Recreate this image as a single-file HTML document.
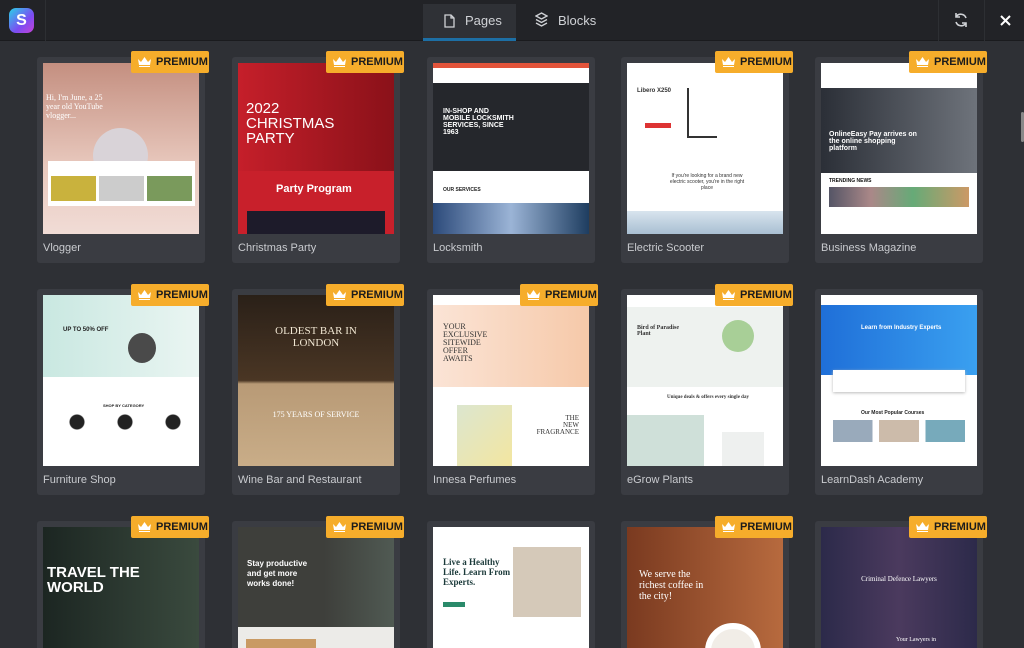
<!DOCTYPE html>
<html style="width:1024px;height:648px;overflow:hidden"><head><meta charset="utf-8"><style>
*{margin:0;padding:0;box-sizing:border-box}
body{width:1024px;height:648px;overflow:hidden;background:#2e3035;font-family:"Liberation Sans",sans-serif;position:relative}
.hdr{position:absolute;left:0;top:0;width:1024px;height:41px;background:#222327;border-bottom:1px solid #1a1b1e}
.logo{position:absolute;left:9px;top:8px;width:25px;height:25px;border-radius:7px;background:linear-gradient(135deg,#29d3e8,#7b4cf2 60%,#c642d6);color:#fff;font-weight:bold;font-size:16px;text-align:center;line-height:25px}
.sep{position:absolute;top:0;width:1px;height:41px;background:#2d2f33}
.tab{position:absolute;top:4px;height:37px;color:#d0d2d6;font-size:13px;line-height:33px}
.tab.on{background:#2f3136;border-bottom:3px solid #1d6fa5}
.card{position:absolute;width:168px;height:206px;background:#3a3c42;border-radius:3px}
.img{position:absolute;left:6px;top:6px;width:156px;height:171px;overflow:hidden;background:#fff}
.lbl{position:absolute;left:6px;top:185px;color:#c9cbcf;font-size:11px}
.prem{position:absolute;width:78px;height:22px;background:#f6ad2b;border-radius:2px;color:#1c1c1c;font-weight:bold;font-size:11px;line-height:22px;padding-left:25px}
.prem svg{position:absolute;left:7px;top:6px}
.b{position:absolute}
</style></head><body>
<div class="hdr">
<div class="logo">S</div>
<div class="sep" style="left:45px"></div>
<div class="tab on" style="left:423px;width:93px"><svg style="position:absolute;left:21px;top:10px" width="11" height="14" viewBox="0 0 11 14" fill="none" stroke="#d0d2d6" stroke-width="1.3"><path d="M1 1h6l3 3v9H1z M7 1v3h3"/></svg><span style="position:absolute;left:42px">Pages</span></div>
<div class="tab" style="left:530px;width:80px"><svg style="position:absolute;left:5px;top:8px" width="13" height="15" viewBox="0 0 13 15" fill="none" stroke="#d0d2d6" stroke-width="1.3"><path d="M6.5 1L12 4 6.5 7 1 4z M1 7.5l5.5 3 5.5-3 M1 11l5.5 3 5.5-3"/></svg><span style="position:absolute;left:28px">Blocks</span></div>
<div class="sep" style="left:938px"></div><div class="sep" style="left:984px"></div>
<svg style="position:absolute;left:953px;top:12px" width="16" height="16" viewBox="0 0 16 16" fill="none" stroke="#d0d2d6" stroke-width="1.6"><path d="M13 6A5.5 5.5 0 0 0 3 5M3 10a5.5 5.5 0 0 0 10 1"/><path d="M3 1v4h4M13 15v-4H9"/></svg>
<svg style="position:absolute;left:1000px;top:15px" width="11" height="11" viewBox="0 0 11 11" stroke="#fff" stroke-width="2"><path d="M1 1l9 9M10 1l-9 9"/></svg>
</div>

<div class="card" style="left:37px;top:57px"><div class="img" style="background:linear-gradient(#c48f80,#e8c8bd 60%,#f1dcd6)">
<div class="b" style="left:3px;top:30px;color:#fff;font-family:'Liberation Serif';font-size:8px;width:60px">Hi, I'm June, a 25 year old YouTube vlogger...</div>
<div class="b" style="left:50px;top:65px;width:55px;height:55px;border-radius:50%;background:#d9d3d8"></div>
<div class="b" style="left:5px;top:98px;width:147px;height:45px;background:#fff"><div class="b" style="left:3px;top:15px;width:45px;height:25px;background:#c9b23d"></div><div class="b" style="left:51px;top:15px;width:45px;height:25px;background:#ccc"></div><div class="b" style="left:99px;top:15px;width:45px;height:25px;background:#7a9a5c"></div></div></div><div class="lbl">Vlogger</div></div>
<div class="card" style="left:232px;top:57px"><div class="img" style="background:#c8202b">
<div class="b" style="left:0;top:0;width:156px;height:108px;background:linear-gradient(90deg,#c51f2a,#8a1119)"></div>
<div class="b" style="left:8px;top:38px;color:#fff;font-size:15px;line-height:15px">2022<br>CHRISTMAS<br>PARTY</div>
<div class="b" style="left:38px;top:120px;color:#fff;font-size:11px;font-weight:bold">Party Program</div>
<div class="b" style="left:9px;top:148px;width:138px;height:23px;background:#1d1b2a"></div></div><div class="lbl">Christmas Party</div></div>
<div class="card" style="left:427px;top:57px"><div class="img">
<div class="b" style="left:0;top:0;width:156px;height:5px;background:#e2543b"></div>
<div class="b" style="left:0;top:20px;width:156px;height:88px;background:#25272c"></div>
<div class="b" style="left:10px;top:45px;color:#fff;font-size:7px;font-weight:bold;width:75px">IN-SHOP AND MOBILE LOCKSMITH SERVICES, SINCE 1963</div>
<div class="b" style="left:10px;top:124px;color:#222;font-size:5px;font-weight:bold">OUR SERVICES</div>
<div class="b" style="left:0;top:140px;width:156px;height:31px;background:linear-gradient(90deg,#2c4a7a,#9bb4d6,#1e3d60)"></div></div><div class="lbl">Locksmith</div></div>
<div class="card" style="left:621px;top:57px"><div class="img">
<div class="b" style="left:10px;top:25px;color:#333;font-size:6px;font-weight:bold">Libero X250</div>
<div class="b" style="left:18px;top:60px;width:26px;height:5px;background:#d33"></div>
<div class="b" style="left:60px;top:25px;width:30px;height:50px;border-left:2px solid #333;border-bottom:2px solid #333"></div>
<div class="b" style="left:40px;top:110px;color:#333;font-size:5px;width:80px;text-align:center">If you're looking for a brand new electric scooter, you're in the right place</div>
<div class="b" style="left:0;top:148px;width:156px;height:23px;background:linear-gradient(#d8e4ee,#a9bfd2)"></div></div><div class="lbl">Electric Scooter</div></div>
<div class="card" style="left:815px;top:57px"><div class="img">
<div class="b" style="left:0;top:25px;width:156px;height:85px;background:linear-gradient(90deg,#2b2f37,#6e737b)"></div>
<div class="b" style="left:8px;top:68px;color:#fff;font-size:7px;font-weight:bold;width:90px">OnlineEasy Pay arrives on the online shopping platform</div>
<div class="b" style="left:8px;top:115px;color:#111;font-size:5px;font-weight:bold">TRENDING NEWS</div>
<div class="b" style="left:8px;top:124px;width:140px;height:20px;background:linear-gradient(90deg,#556,#a88 30%,#6a7 60%,#c96)"></div></div><div class="lbl">Business Magazine</div></div>

<div class="card" style="left:37px;top:289px"><div class="img">
<div class="b" style="left:0;top:0;width:156px;height:82px;background:linear-gradient(90deg,#c9e8e1,#eaf5f2)"></div>
<div class="b" style="left:20px;top:32px;color:#222;font-size:6px;font-weight:bold">UP TO 50% OFF</div>
<div class="b" style="left:85px;top:38px;width:28px;height:30px;border-radius:50%;background:#4a4a4a"></div>
<div class="b" style="left:60px;top:108px;color:#222;font-size:4px;font-weight:bold">SHOP BY CATEGORY</div>
<div class="b" style="left:22px;top:118px;width:120px;height:18px;background:radial-gradient(circle at 10% 50%,#222 7px,transparent 8px),radial-gradient(circle at 50% 50%,#222 7px,transparent 8px),radial-gradient(circle at 90% 50%,#222 7px,transparent 8px)"></div></div><div class="lbl">Furniture Shop</div></div>
<div class="card" style="left:232px;top:289px"><div class="img" style="background:linear-gradient(#2a2018,#4a3624 50%,#b89a76 52%,#c9ad88)">
<div class="b" style="left:18px;top:30px;color:#f0e6d2;font-family:'Liberation Serif';font-size:11px;width:120px;text-align:center;line-height:12px">OLDEST BAR IN LONDON</div>
<div class="b" style="left:18px;top:115px;color:#fff;font-family:'Liberation Serif';font-size:8px;width:120px;text-align:center">175 YEARS OF SERVICE</div></div><div class="lbl">Wine Bar and Restaurant</div></div>
<div class="card" style="left:427px;top:289px"><div class="img">
<div class="b" style="left:0;top:10px;width:156px;height:82px;background:linear-gradient(90deg,#fbe4d6,#f6c9a9)"></div>
<div class="b" style="left:10px;top:28px;color:#333;font-family:'Liberation Serif';font-size:8px;line-height:8px">YOUR<br>EXCLUSIVE<br>SITEWIDE<br>OFFER<br>AWAITS</div>
<div class="b" style="left:24px;top:110px;width:55px;height:61px;background:linear-gradient(135deg,#dce6cf,#f3e6a0)"></div>
<div class="b" style="left:100px;top:120px;color:#333;font-family:'Liberation Serif';font-size:7px;text-align:right;width:46px;line-height:7px">THE<br>NEW<br>FRAGRANCE</div></div><div class="lbl">Innesa Perfumes</div></div>
<div class="card" style="left:621px;top:289px"><div class="img">
<div class="b" style="left:0;top:12px;width:156px;height:80px;background:#eef2ef"></div>
<div class="b" style="left:10px;top:30px;color:#333;font-family:'Liberation Serif';font-size:6px;font-weight:bold">Bird of Paradise<br>Plant</div>
<div class="b" style="left:95px;top:25px;width:32px;height:32px;border-radius:50%;background:#a8cf97"></div>
<div class="b" style="left:40px;top:100px;color:#333;font-family:'Liberation Serif';font-size:5px;font-weight:bold">Unique deals &amp; offers every single day</div>
<div class="b" style="left:0;top:120px;width:77px;height:51px;background:#cfe0d9"></div>
<div class="b" style="left:95px;top:137px;width:42px;height:34px;background:#eef0ef"></div></div><div class="lbl">eGrow Plants</div></div>
<div class="card" style="left:815px;top:289px"><div class="img">
<div class="b" style="left:0;top:10px;width:156px;height:70px;background:linear-gradient(90deg,#1f6fd8,#3aa0f0)"></div>
<div class="b" style="left:40px;top:30px;color:#fff;font-size:6px;font-weight:bold">Learn from Industry Experts</div>
<div class="b" style="left:12px;top:75px;width:132px;height:22px;background:#fff;box-shadow:0 1px 3px #bbb"></div>
<div class="b" style="left:40px;top:115px;color:#222;font-size:5px;font-weight:bold">Our Most Popular Courses</div>
<div class="b" style="left:12px;top:125px;width:132px;height:22px;background:linear-gradient(90deg,#9ab 30%,#fff 30%,#fff 35%,#cba 35%,#cba 65%,#fff 65%,#fff 70%,#7ab 70%)"></div></div><div class="lbl">LearnDash Academy</div></div>

<div class="card" style="left:37px;top:521px"><div class="img" style="background:linear-gradient(90deg,#1c2622,#3a4a3e)">
<div class="b" style="left:4px;top:38px;color:#fff;font-size:15px;font-weight:bold;line-height:15px">TRAVEL THE<br>WORLD</div></div></div>
<div class="card" style="left:232px;top:521px"><div class="img" style="background:linear-gradient(90deg,#3e3f3b 55%,#505a53)">
<div class="b" style="left:9px;top:32px;color:#fff;font-size:8px;font-weight:bold;line-height:10px">Stay productive<br>and get more<br>works done!</div>
<div class="b" style="left:0;top:100px;width:156px;height:71px;background:#ecebe8"></div>
<div class="b" style="left:8px;top:112px;width:70px;height:40px;background:#c99a63"></div></div></div>
<div class="card" style="left:427px;top:521px"><div class="img">
<div class="b" style="left:10px;top:30px;color:#1b3a3a;font-family:'Liberation Serif';font-size:9px;font-weight:bold;line-height:10px">Live a Healthy<br>Life. Learn From<br>Experts.</div>
<div class="b" style="left:80px;top:20px;width:68px;height:70px;background:#d5c9b9"></div>
<div class="b" style="left:10px;top:75px;width:22px;height:5px;background:#2a8a6a"></div></div></div>
<div class="card" style="left:621px;top:521px"><div class="img" style="background:linear-gradient(90deg,#7a3a20,#b76a3e)">
<div class="b" style="left:12px;top:42px;color:#fff;font-family:'Liberation Serif';font-size:10px;line-height:11px">We serve the<br>richest coffee in<br>the city!</div>
<div class="b" style="left:78px;top:96px;width:56px;height:56px;border-radius:50%;background:#f1ede7;border:6px solid #fff"></div></div></div>
<div class="card" style="left:815px;top:521px"><div class="img" style="background:linear-gradient(90deg,#2c2a4a,#4b3a5e 50%,#2c2a4a)">
<div class="b" style="left:40px;top:48px;color:#fff;font-family:'Liberation Serif';font-size:7px;width:76px;text-align:center">Criminal Defence Lawyers</div>
<div class="b" style="left:75px;top:110px;color:#fff;font-family:'Liberation Serif';font-size:6px">Your Lawyers in</div></div></div>

<div class="prem" style="left:131px;top:51px"><svg width="13" height="10" viewBox="0 0 13 10" fill="#fff"><path d="M0 2l3 3 3.5-5 3.5 5 3-3-1 6H1z M1 9h11v1H1z"/></svg>PREMIUM</div>
<div class="prem" style="left:326px;top:51px"><svg width="13" height="10" viewBox="0 0 13 10" fill="#fff"><path d="M0 2l3 3 3.5-5 3.5 5 3-3-1 6H1z M1 9h11v1H1z"/></svg>PREMIUM</div>
<div class="prem" style="left:715px;top:51px"><svg width="13" height="10" viewBox="0 0 13 10" fill="#fff"><path d="M0 2l3 3 3.5-5 3.5 5 3-3-1 6H1z M1 9h11v1H1z"/></svg>PREMIUM</div>
<div class="prem" style="left:909px;top:51px"><svg width="13" height="10" viewBox="0 0 13 10" fill="#fff"><path d="M0 2l3 3 3.5-5 3.5 5 3-3-1 6H1z M1 9h11v1H1z"/></svg>PREMIUM</div>
<div class="prem" style="left:131px;top:284px"><svg width="13" height="10" viewBox="0 0 13 10" fill="#fff"><path d="M0 2l3 3 3.5-5 3.5 5 3-3-1 6H1z M1 9h11v1H1z"/></svg>PREMIUM</div>
<div class="prem" style="left:326px;top:284px"><svg width="13" height="10" viewBox="0 0 13 10" fill="#fff"><path d="M0 2l3 3 3.5-5 3.5 5 3-3-1 6H1z M1 9h11v1H1z"/></svg>PREMIUM</div>
<div class="prem" style="left:520px;top:284px"><svg width="13" height="10" viewBox="0 0 13 10" fill="#fff"><path d="M0 2l3 3 3.5-5 3.5 5 3-3-1 6H1z M1 9h11v1H1z"/></svg>PREMIUM</div>
<div class="prem" style="left:715px;top:284px"><svg width="13" height="10" viewBox="0 0 13 10" fill="#fff"><path d="M0 2l3 3 3.5-5 3.5 5 3-3-1 6H1z M1 9h11v1H1z"/></svg>PREMIUM</div>
<div class="prem" style="left:131px;top:516px"><svg width="13" height="10" viewBox="0 0 13 10" fill="#fff"><path d="M0 2l3 3 3.5-5 3.5 5 3-3-1 6H1z M1 9h11v1H1z"/></svg>PREMIUM</div>
<div class="prem" style="left:326px;top:516px"><svg width="13" height="10" viewBox="0 0 13 10" fill="#fff"><path d="M0 2l3 3 3.5-5 3.5 5 3-3-1 6H1z M1 9h11v1H1z"/></svg>PREMIUM</div>
<div class="prem" style="left:715px;top:516px"><svg width="13" height="10" viewBox="0 0 13 10" fill="#fff"><path d="M0 2l3 3 3.5-5 3.5 5 3-3-1 6H1z M1 9h11v1H1z"/></svg>PREMIUM</div>
<div class="prem" style="left:909px;top:516px"><svg width="13" height="10" viewBox="0 0 13 10" fill="#fff"><path d="M0 2l3 3 3.5-5 3.5 5 3-3-1 6H1z M1 9h11v1H1z"/></svg>PREMIUM</div>
<div class="b" style="left:1021px;top:112px;width:3px;height:30px;background:#888;border-radius:2px"></div>
</body></html>
